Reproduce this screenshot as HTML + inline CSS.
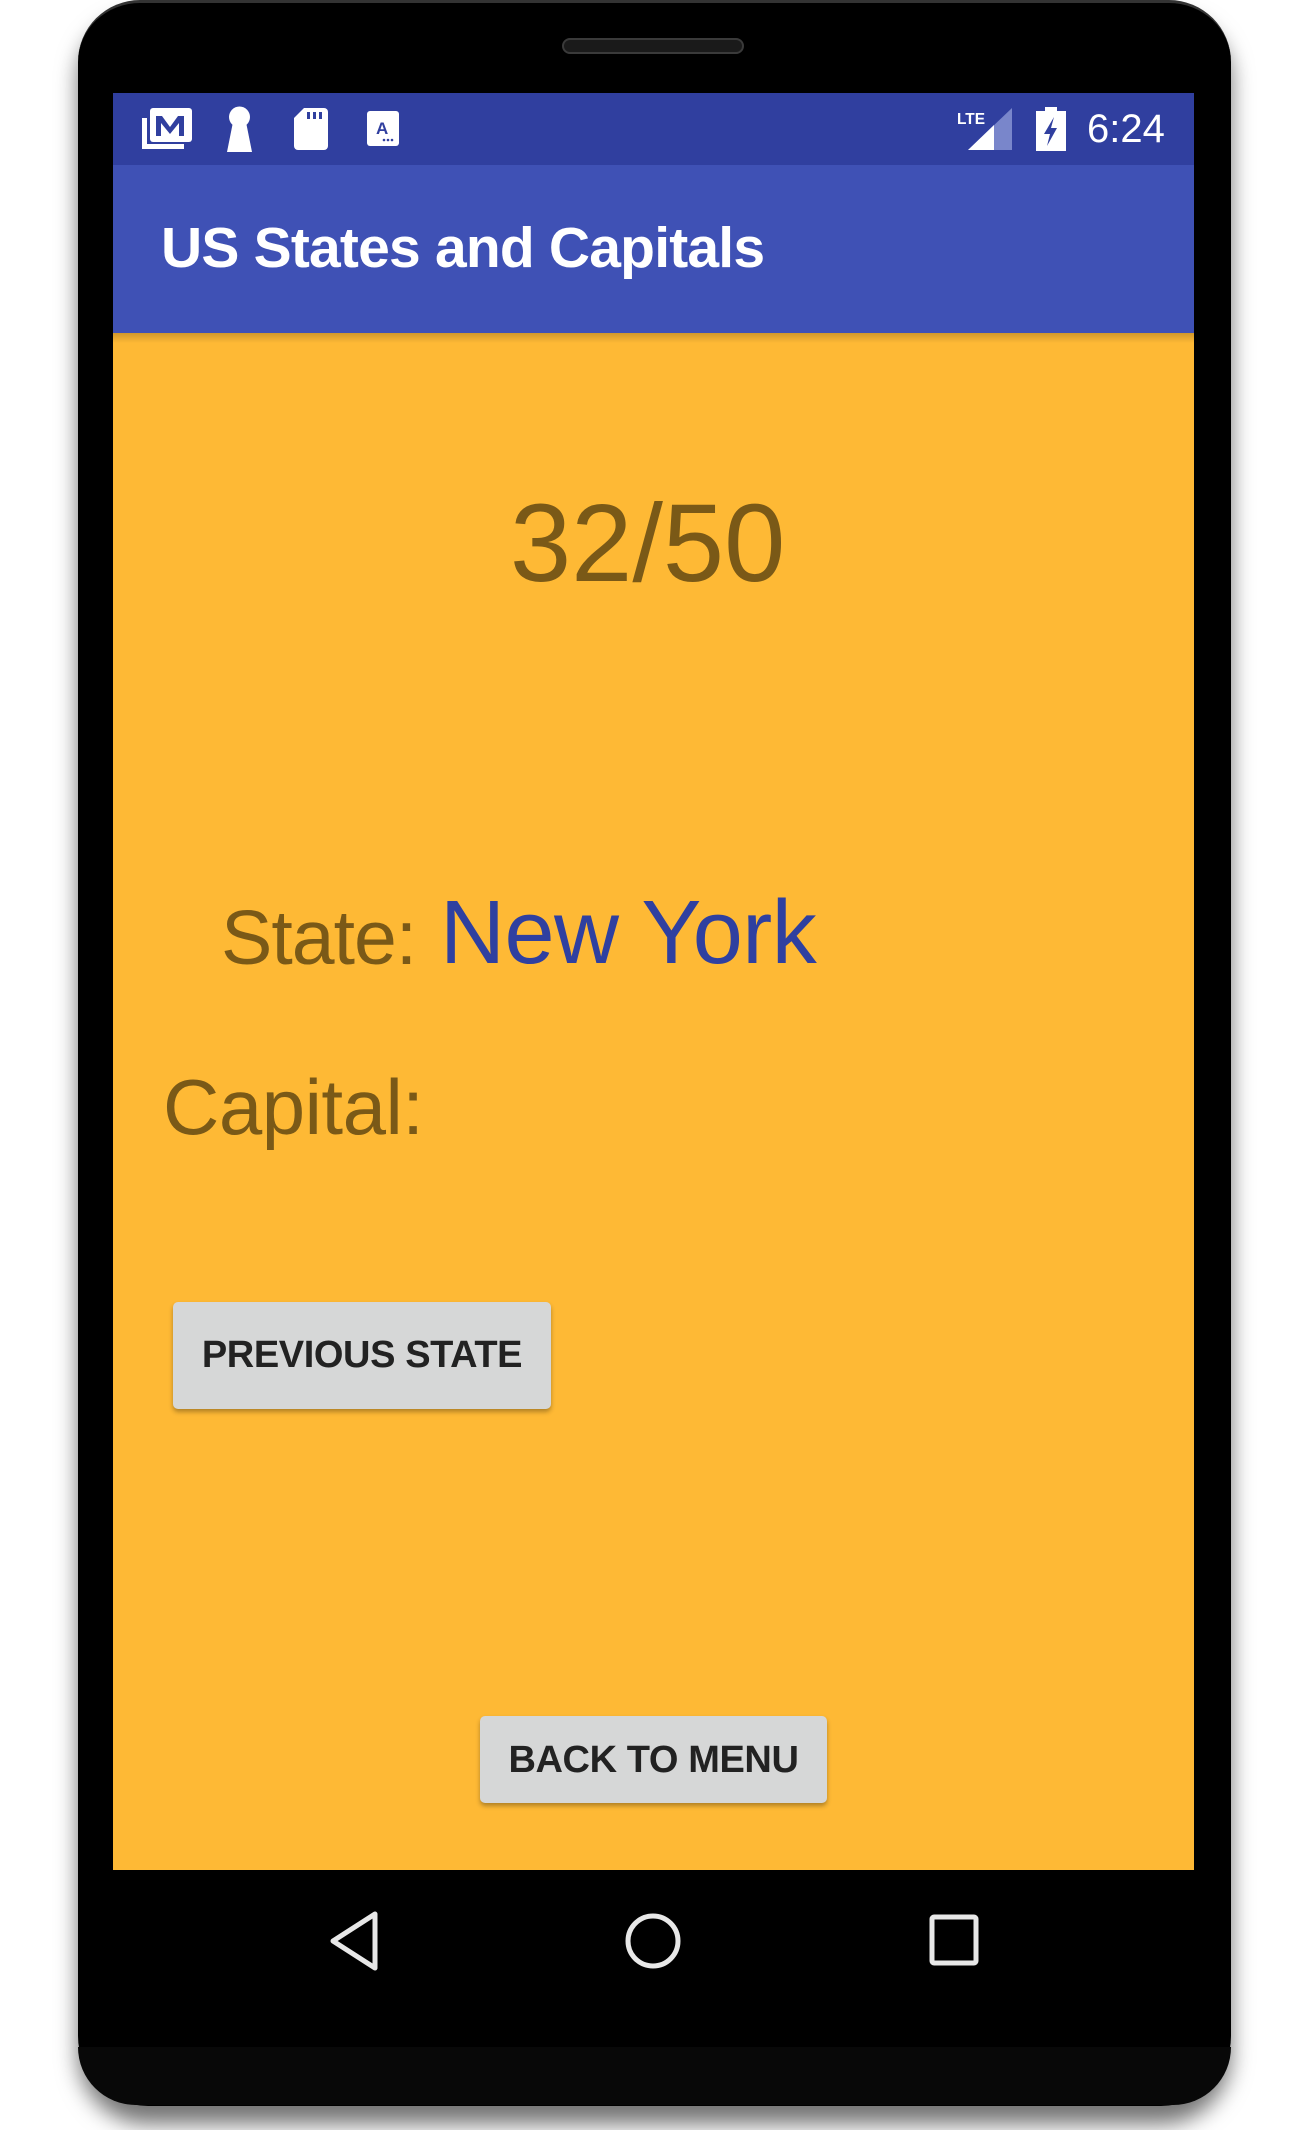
<!DOCTYPE html>
<html><head><meta charset="utf-8"><style>
*{margin:0;padding:0;box-sizing:border-box}
html,body{width:1305px;height:2130px;background:#fff;overflow:hidden;font-family:"Liberation Sans",sans-serif}
.abs{position:absolute}
#phone{left:78px;top:0;width:1153px;height:2106px;background:#000;border-radius:62px 62px 70px 70px;box-shadow:0 18px 22px rgba(0,0,0,.55);border-top:3px solid #333}
#chin{left:78px;top:2047px;width:1153px;height:58px;background:#080808;border-radius:0 0 70px 70px}
#speaker{left:562px;top:38px;width:182px;height:16px;border-radius:8px;background:#1a1a1a;border:2px solid #3a3a3a}
#status{left:113px;top:93px;width:1081px;height:72px;background:#303F9F}
#appbar{left:113px;top:165px;width:1081px;height:168px;background:#3F51B5}
#content{left:113px;top:333px;width:1081px;height:1537px;background:#FEB935}
#shadow{left:113px;top:333px;width:1081px;height:10px;background:linear-gradient(rgba(0,0,0,.18),rgba(0,0,0,0))}
.t{position:absolute;white-space:nowrap;line-height:1}
.btn{position:absolute;background:#D6D7D7;border-radius:5px;box-shadow:0 3px 5px rgba(0,0,0,.3);color:#222;font-size:38px;font-weight:bold;text-align:center}
</style></head><body>
<div id="phone" class="abs"></div>
<div id="chin" class="abs"></div>
<div id="speaker" class="abs"></div>
<div id="status" class="abs"></div>
<div id="appbar" class="abs"></div>
<div id="content" class="abs"></div>
<div id="shadow" class="abs"></div>

<svg class="abs" style="left:0;top:0" width="1305" height="200">
 <rect x="142" y="118" width="5" height="31" fill="#fff"/><rect x="142" y="144" width="42" height="5" fill="#fff"/>
 <rect x="150" y="108" width="42" height="34" rx="3" fill="#fff"/>
 <path d="M156 136V116h6l8 11 8-11h6v20h-5v-13l-9 11-9-11v13z" fill="#303F9F"/>
 <circle cx="239.5" cy="117" r="10.5" fill="#fff"/><path d="M233 122h13l6 30h-25z" fill="#fff"/>
 <path d="M304 108h20a4 4 0 0 1 4 4v34a4 4 0 0 1-4 4h-26a4 4 0 0 1-4-4v-28z" fill="#fff"/>
 <rect x="307" y="112" width="3" height="7" fill="#303F9F"/><rect x="313" y="112" width="3" height="7" fill="#303F9F"/><rect x="319" y="112" width="3" height="7" fill="#303F9F"/>
 <rect x="367" y="111" width="32" height="35" rx="3" fill="#fff"/>
 <text x="376" y="134" font-family="Liberation Sans" font-weight="bold" font-size="17" fill="#303F9F">A</text>
 <circle cx="384" cy="140" r="1.3" fill="#303F9F"/><circle cx="388" cy="140" r="1.3" fill="#303F9F"/><circle cx="392" cy="140" r="1.3" fill="#303F9F"/>
 <text x="957" y="124" font-family="Liberation Sans" font-weight="bold" font-size="16" fill="#fff" textLength="28" lengthAdjust="spacingAndGlyphs">LTE</text>
 <path d="M968 150L1012 108V150z" fill="#7986CB"/>
 <path d="M968 150L994 125V150z" fill="#fff"/>
 <rect x="1045" y="107" width="12" height="5" fill="#fff"/>
 <rect x="1036" y="111" width="30" height="40" fill="#fff"/>
 <path d="M1054 117l-10 17h6l-3 12 10-18h-6z" fill="#303F9F"/>
</svg>
<div class="t" style="left:1087px;top:109px;font-size:40px;color:#fff">6:24</div>

<div class="t" style="left:161px;top:220px;font-size:57px;font-weight:bold;color:#fff;letter-spacing:-0.8px">US States and Capitals</div>

<div class="t" style="left:510px;top:489px;font-size:110px;color:#7A5917">32/50</div>
<div class="t" style="left:221px;top:900px;font-size:77px;color:#7A5917;letter-spacing:-1px">State:</div>
<div class="t" style="left:440px;top:888px;font-size:90px;color:#2F40A0;letter-spacing:-0.5px">New York</div>
<div class="t" style="left:163px;top:1068px;font-size:78px;color:#7A5917;letter-spacing:-0.5px">Capital:</div>

<div class="btn" style="left:173px;top:1302px;width:378px;height:107px;line-height:107px;letter-spacing:-0.4px">PREVIOUS STATE</div>
<div class="btn" style="left:480px;top:1716px;width:347px;height:87px;line-height:89px;letter-spacing:-0.4px">BACK TO MENU</div>

<svg class="abs" style="left:0;top:1890px" width="1305" height="100">
 <path d="M375 24L333 51L375 78z" fill="none" stroke="#e8e8e8" stroke-width="5" stroke-linejoin="round"/>
 <circle cx="653" cy="51" r="25" fill="none" stroke="#e8e8e8" stroke-width="5"/>
 <rect x="932" y="27" width="44" height="46" rx="2" fill="none" stroke="#e8e8e8" stroke-width="5"/>
</svg>
</body></html>
